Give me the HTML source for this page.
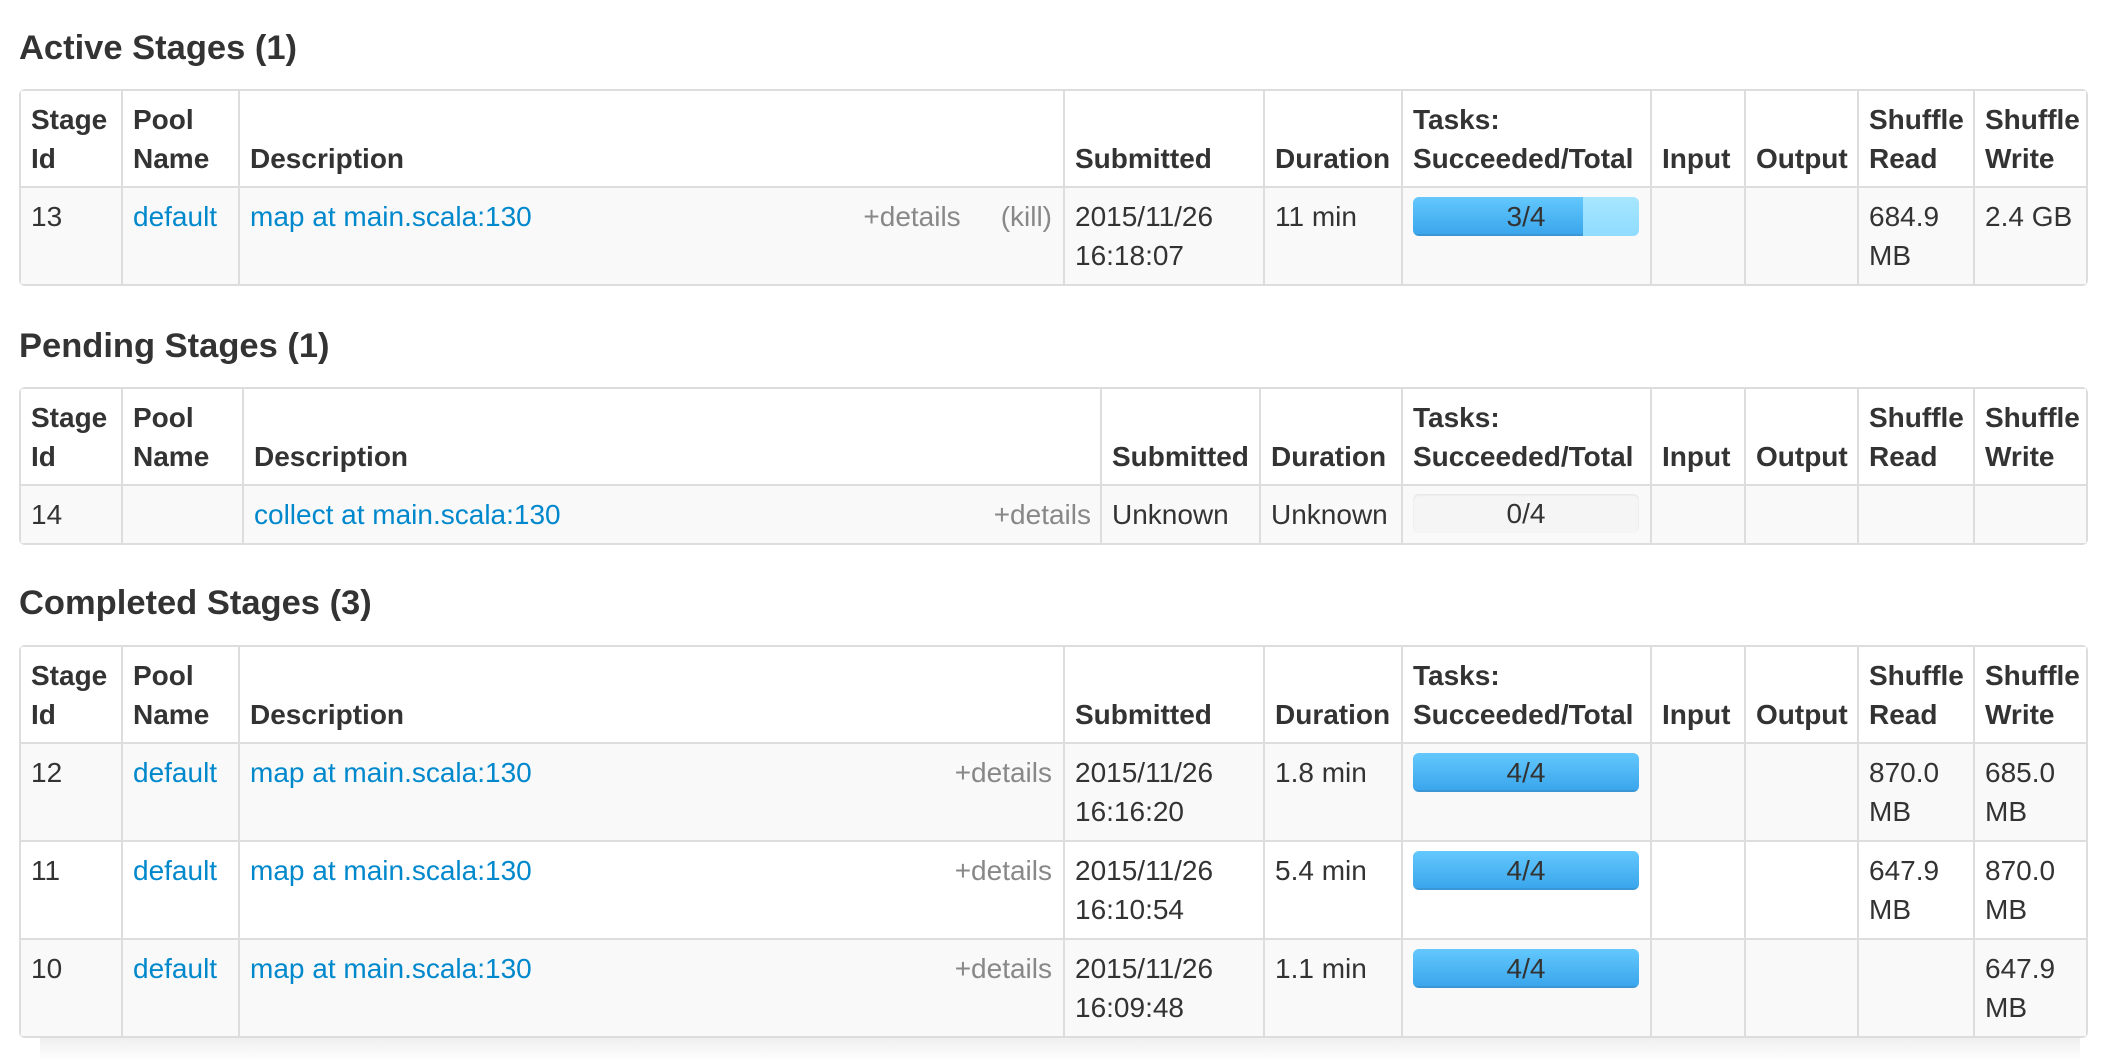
<!DOCTYPE html>
<html><head><meta charset="utf-8"><style>
html,body{margin:0;padding:0;background:#fff;}
body{width:2116px;height:1062px;overflow:hidden;position:relative;font-family:"Liberation Sans",Arial,sans-serif;color:#333;font-size:28px;line-height:39px;}
h4{position:absolute;left:19px;margin:0;font-size:34.5px;font-weight:bold;line-height:40px;color:#333;}
table{position:absolute;left:19px;width:2069px;border-collapse:separate;border-spacing:0;table-layout:fixed;border:2px solid #ddd;border-radius:6px;}
td,th{border-left:2px solid #ddd;padding:9px 11px 8px 10px;vertical-align:top;text-align:left;white-space:nowrap;overflow:hidden;}
td{padding-bottom:9px;}
td:first-child,th:first-child{border-left:none;}
th{vertical-align:bottom;font-weight:bold;background:#fff;}
td{border-top:2px solid #ddd;background:#f9f9f9;}
tr.w td{background:#fff;}
a{color:#0088cc;text-decoration:none;}
.det{float:right;color:#888;}
.kill{float:right;color:#888;margin-left:40px;}
.pb{position:relative;height:39px;border-radius:6px;overflow:hidden;background:#f5f5f5;box-shadow:inset 0 1px 2px rgba(0,0,0,.08);text-align:center;margin-top:0;}
.pb .f{position:absolute;left:0;top:0;bottom:0;background:linear-gradient(#64c8fd,#3aa6ec);border-bottom:2px solid #3a96d4;box-sizing:border-box;}
.pb .l{position:absolute;top:0;bottom:0;background:linear-gradient(#a7e6ff,#8fdcff);}
.pb span{position:relative;color:#333;}
.shadow{position:absolute;left:40px;top:1038px;width:2040px;height:24px;background:linear-gradient(#efefef,#fff);}
</style></head><body>
<h4 style="top:28px">Active Stages (1)</h4>
<table style="top:89px">
<colgroup><col style="width:100px"><col style="width:117px"><col style="width:825px"><col style="width:200px"><col style="width:138px"><col style="width:249px"><col style="width:94px"><col style="width:113px"><col style="width:116px"><col></colgroup>
<tr><th>Stage<br>Id</th><th>Pool<br>Name</th><th>Description</th><th>Submitted</th><th>Duration</th><th>Tasks:<br>Succeeded/Total</th><th>Input</th><th>Output</th><th>Shuffle<br>Read</th><th>Shuffle<br>Write</th></tr>
<tr><td>13</td><td><a>default</a></td><td><a>map at main.scala:130</a><span class="kill">(kill)</span><span class="det">+details</span></td><td>2015/11/26<br>16:18:07</td><td>11 min</td><td><div class="pb"><div class="f" style="width:75%"></div><div class="l" style="left:75%;right:0"></div><span>3/4</span></div></td><td></td><td></td><td>684.9<br>MB</td><td>2.4 GB</td></tr>
</table>

<h4 style="top:326px">Pending Stages (1)</h4>
<table style="top:387px">
<colgroup><col style="width:100px"><col style="width:121px"><col style="width:858px"><col style="width:159px"><col style="width:142px"><col style="width:249px"><col style="width:94px"><col style="width:113px"><col style="width:116px"><col></colgroup>
<tr><th>Stage<br>Id</th><th>Pool<br>Name</th><th>Description</th><th>Submitted</th><th>Duration</th><th>Tasks:<br>Succeeded/Total</th><th>Input</th><th>Output</th><th>Shuffle<br>Read</th><th>Shuffle<br>Write</th></tr>
<tr><td>14</td><td></td><td><a>collect at main.scala:130</a><span class="det" style="margin-right:-2px">+details</span></td><td>Unknown</td><td>Unknown</td><td style="padding-top:8px;padding-bottom:8px"><div class="pb"><span>0/4</span></div></td><td></td><td></td><td></td><td></td></tr>
</table>

<h4 style="top:583px">Completed Stages (3)</h4>
<table style="top:645px">
<colgroup><col style="width:100px"><col style="width:117px"><col style="width:825px"><col style="width:200px"><col style="width:138px"><col style="width:249px"><col style="width:94px"><col style="width:113px"><col style="width:116px"><col></colgroup>
<tr><th>Stage<br>Id</th><th>Pool<br>Name</th><th>Description</th><th>Submitted</th><th>Duration</th><th>Tasks:<br>Succeeded/Total</th><th>Input</th><th>Output</th><th>Shuffle<br>Read</th><th>Shuffle<br>Write</th></tr>
<tr><td>12</td><td><a>default</a></td><td><a>map at main.scala:130</a><span class="det">+details</span></td><td>2015/11/26<br>16:16:20</td><td>1.8 min</td><td><div class="pb"><div class="f" style="width:100%"></div><span>4/4</span></div></td><td></td><td></td><td>870.0<br>MB</td><td>685.0<br>MB</td></tr>
<tr class="w"><td>11</td><td><a>default</a></td><td><a>map at main.scala:130</a><span class="det">+details</span></td><td>2015/11/26<br>16:10:54</td><td>5.4 min</td><td><div class="pb"><div class="f" style="width:100%"></div><span>4/4</span></div></td><td></td><td></td><td>647.9<br>MB</td><td>870.0<br>MB</td></tr>
<tr><td>10</td><td><a>default</a></td><td><a>map at main.scala:130</a><span class="det">+details</span></td><td>2015/11/26<br>16:09:48</td><td>1.1 min</td><td><div class="pb"><div class="f" style="width:100%"></div><span>4/4</span></div></td><td></td><td></td><td></td><td>647.9<br>MB</td></tr>
</table>
<div class="shadow"></div>
</body></html>
